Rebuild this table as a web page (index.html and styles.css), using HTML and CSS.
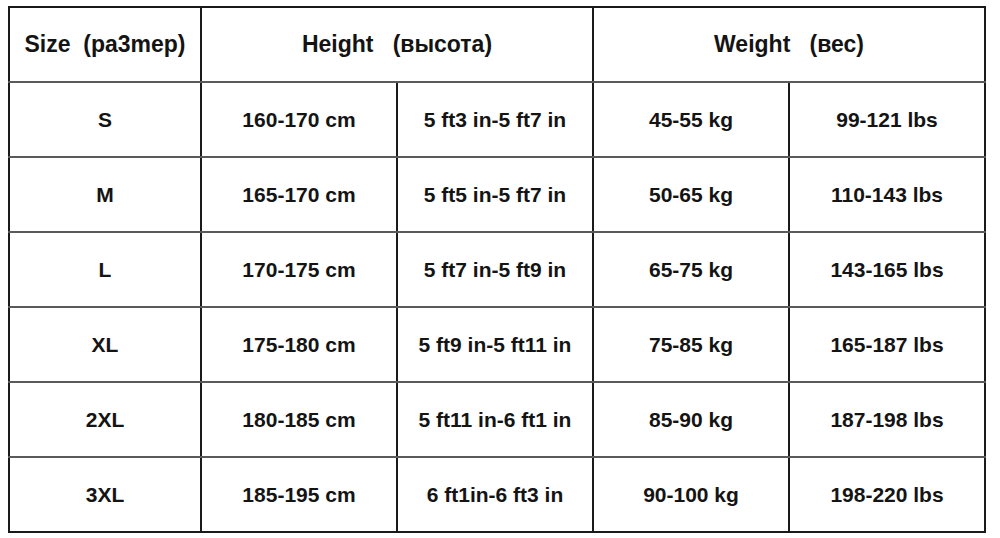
FILE: index.html
```html
<!DOCTYPE html>
<html>
<head>
<meta charset="utf-8">
<link rel="stylesheet" href="styles.css">
</head>
<body>
<table class="size-table">
  <colgroup>
    <col class="c-size">
    <col class="c-val"><col class="c-val"><col class="c-val"><col class="c-val">
  </colgroup>
  <tr class="head">
    <th>Size&nbsp;&nbsp;(pa3mep)</th>
    <th colspan="2">Height&nbsp;&nbsp;&nbsp;(высота)</th>
    <th colspan="2">Weight&nbsp;&nbsp;&nbsp;(вес)</th>
  </tr>
  <tr><td>S</td><td>160-170 cm</td><td>5 ft3 in-5 ft7 in</td><td>45-55 kg</td><td>99-121 lbs</td></tr>
  <tr><td>M</td><td>165-170 cm</td><td>5 ft5 in-5 ft7 in</td><td>50-65 kg</td><td>110-143 lbs</td></tr>
  <tr><td>L</td><td>170-175 cm</td><td>5 ft7 in-5 ft9 in</td><td>65-75 kg</td><td>143-165 lbs</td></tr>
  <tr><td>XL</td><td>175-180 cm</td><td>5 ft9 in-5 ft11 in</td><td>75-85 kg</td><td>165-187 lbs</td></tr>
  <tr><td>2XL</td><td>180-185 cm</td><td>5 ft11 in-6 ft1 in</td><td>85-90 kg</td><td>187-198 lbs</td></tr>
  <tr><td>3XL</td><td>185-195 cm</td><td>6 ft1in-6 ft3 in</td><td>90-100 kg</td><td>198-220 lbs</td></tr>
</table>
</body>
</html>
```

FILE: styles.css
```css
html, body {
  margin: 0;
  padding: 0;
  background: #ffffff;
}

body {
  padding: 6px 0 0 8px;
  font-family: "Liberation Sans", Arial, sans-serif;
  color: #141414;
}

.size-table {
  border-collapse: collapse;
  table-layout: fixed;
  width: 977px;
}

.c-size { width: 192px; }
.c-val { width: 196px; }

.size-table th,
.size-table td {
  height: 73px;
  padding: 0;
  text-align: center;
  vertical-align: middle;
  font-weight: bold;
  font-size: 21px;
  border-left: 2px solid #1a1a1a;
  border-right: 2px solid #1a1a1a;
  border-top: 2px solid #5a5a5a;
  border-bottom: 2px solid #5a5a5a;
  white-space: nowrap;
}

.size-table .head th {
  font-size: 23px;
  border-top-color: #1a1a1a;
}

.size-table tr:last-child td {
  border-bottom-color: #1a1a1a;
}
```
